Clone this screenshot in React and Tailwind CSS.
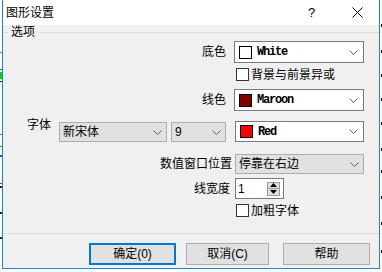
const Chevron = ({ className = "" }) => (
  <svg width="9" height="5" viewBox="0 0 9 5" className={`shrink-0 ${className}`}>
    <path d="M0.5 0.5L4.5 4.5L8.5 0.5" fill="none" stroke="#606060" strokeWidth="1" />
  </svg>
);

const ColorCombo = ({ swatch, name, className = "" }) => (
  <div className={`flex items-center bg-white border border-[#7a7a7a] ${className}`}>
    <span className={`ml-[4px] w-[13px] h-[13px] border border-black shrink-0 ${swatch}`} />
    <span className="ml-[5px] flex-1 font-['Liberation_Mono',monospace] font-bold text-[12px] tracking-[-1.2px] leading-none text-black">
      {name}
    </span>
    <Chevron className="mr-[5px]" />
  </div>
);

const GrayCombo = ({ value, className = "" }) => (
  <div className={`flex items-center bg-[#e1e1e1] border border-[#adadad] pl-[3px] pr-[4px] ${className}`}>
    <span className="flex-1 leading-none">{value}</span>
    <Chevron />
  </div>
);

const CheckRow = ({ label, className = "" }) => (
  <div className={`flex items-center h-[13px] pl-[233px] ${className}`}>
    <span className="w-[13px] h-[13px] border border-[#333] bg-white shrink-0" />
    <span className="ml-[2px] leading-none">{label}</span>
  </div>
);

const Button = ({ children, className = "" }) => (
  <button className={`h-[22px] bg-[#e1e1e1] flex items-center justify-center text-[12px] leading-none text-black ${className}`}>
    {children}
  </button>
);

const leftMarks = [
  { y: "top-[52px]", c: "bg-[#e040e0]", h: "h-[1px]" },
  { y: "top-[69px]", c: "bg-[#2050d0]", h: "h-[1px]" },
  { y: "top-[72px]", c: "bg-[#10d010]", h: "h-[7px]" },
  { y: "top-[81px]", c: "bg-[#202020]", h: "h-[1px]" },
  { y: "top-[134px]", c: "bg-[#e040e0]", h: "h-[1px]" },
  { y: "top-[146px]", c: "bg-[#10b010]", h: "h-[1px]" },
  { y: "top-[155px]", c: "bg-[#2050d0]", h: "h-[2px]" },
  { y: "top-[183px]", c: "bg-[#a03030]", h: "h-[1px]" },
  { y: "top-[186px]", c: "bg-[#202020]", h: "h-[2px]" },
  { y: "top-[212px]", c: "bg-[#202020]", h: "h-[2px]" },
  { y: "top-[237px]", c: "bg-[#202020]", h: "h-[2px]" },
];

const rightMarks = ["top-[24px]", "top-[50px]", "top-[74px]", "top-[98px]", "top-[122px]", "top-[148px]", "top-[170px]", "top-[196px]", "top-[222px]", "top-[250px]"];

export default function App() {
  return (
    <div className="w-[382px] h-[272px] bg-white flex overflow-hidden font-['Liberation_Sans','Noto_Sans_CJK_SC',sans-serif] text-[12px] text-black">
      <div className="relative w-[2px] h-full shrink-0">
        {leftMarks.map((m, i) => (
          <span key={i} className={`absolute left-0 w-[2px] ${m.y} ${m.c} ${m.h}`} />
        ))}
      </div>

      <div className="w-[378px] h-[269px] shrink-0 flex flex-col border-l border-r border-b border-[#1a86d9]">
        {/* title bar */}
        <div className="h-[25px] bg-white flex items-center pr-[16px]">
          <span className="ml-[3px] leading-none">图形设置</span>
          <span className="flex-1" />
          <span className="w-[7px] leading-none text-[13px]">?</span>
          <svg width="11" height="11" viewBox="0 0 11 11" className="ml-[37px]">
            <path d="M0.5 0.5L10.5 10.5M10.5 0.5L0.5 10.5" stroke="#000" strokeWidth="1" />
          </svg>
        </div>

        <div className="flex-1 bg-[#f0f0f0] flex flex-col">
          <fieldset className="mt-[1px] h-[208px] border-t border-b border-[#dcdcdc]">
            <legend className="ml-[5px] px-[3px] leading-[12px]">选项</legend>

            <div className="flex items-center h-[22px] mt-[3px]">
              <span className="w-[223px] text-right leading-none">底色</span>
              <ColorCombo swatch="bg-white" name="White" className="ml-[8px] w-[130px] h-[22px]" />
            </div>

            <CheckRow label="背景与前景异或" className="mt-[5px]" />

            <div className="flex items-center h-[22px] mt-[8px]">
              <span className="w-[223px] text-right leading-none">线色</span>
              <ColorCombo swatch="bg-[#800000]" name="Maroon" className="ml-[8px] w-[130px] h-[22px]" />
            </div>

            <div className="flex items-start h-[21px] mt-[10px]">
              <span className="ml-[24px] mt-[-2px] leading-[12px]">字体</span>
              <GrayCombo value="新宋体" className="ml-[8px] mt-[1px] w-[108px] h-[20px]" />
              <GrayCombo value="9" className="ml-[4px] mt-[1px] w-[55px] h-[20px]" />
              <ColorCombo swatch="bg-[#ff0000]" name="Red" className="ml-[9px] w-[129px] h-[21px]" />
            </div>

            <div className="flex items-center h-[20px] mt-[12px]">
              <span className="w-[229px] text-right leading-none">数值窗口位置</span>
              <GrayCombo value="停靠在右边" className="ml-[3px] w-[129px] h-[20px]" />
            </div>

            <div className="flex items-center h-[21px] mt-[4px]">
              <span className="w-[227px] text-right leading-none">线宽度</span>
              <div className="ml-[5px] w-[49px] h-[21px] bg-white border border-[#7a7a7a] flex items-center">
                <span className="flex-1 pl-[2px] leading-none">1</span>
                <div className="mr-[3px] w-[13px] h-[14px] bg-[#e1e1e1] border border-[#9a9a9a] flex flex-col">
                  <div className="flex-1 flex items-center justify-center border-b border-[#9a9a9a]">
                    <svg width="7" height="4" viewBox="0 0 7 4"><path d="M3.5 0L7 4H0Z" fill="#000" /></svg>
                  </div>
                  <div className="flex-1 flex items-center justify-center">
                    <svg width="7" height="4" viewBox="0 0 7 4"><path d="M0 0H7L3.5 4Z" fill="#000" /></svg>
                  </div>
                </div>
              </div>
            </div>

            <CheckRow label="加粗字体" className="mt-[5px]" />
          </fieldset>

          <div className="flex pt-[9px]">
            <Button className="ml-[86px] w-[87px] border-2 border-[#0078d7]">确定(0)</Button>
            <Button className="ml-[10px] w-[83px] border border-[#adadad]">取消(C)</Button>
            <Button className="ml-[14px] w-[87px] border border-[#adadad]">帮助</Button>
          </div>
        </div>
      </div>

      <div className="relative w-[3px] h-full shrink-0">
        {rightMarks.map((y, i) => (
          <span key={i} className={`absolute left-[1px] w-[2px] h-[3px] bg-[#101010] ${y}`} />
        ))}
      </div>
    </div>
  );
}
